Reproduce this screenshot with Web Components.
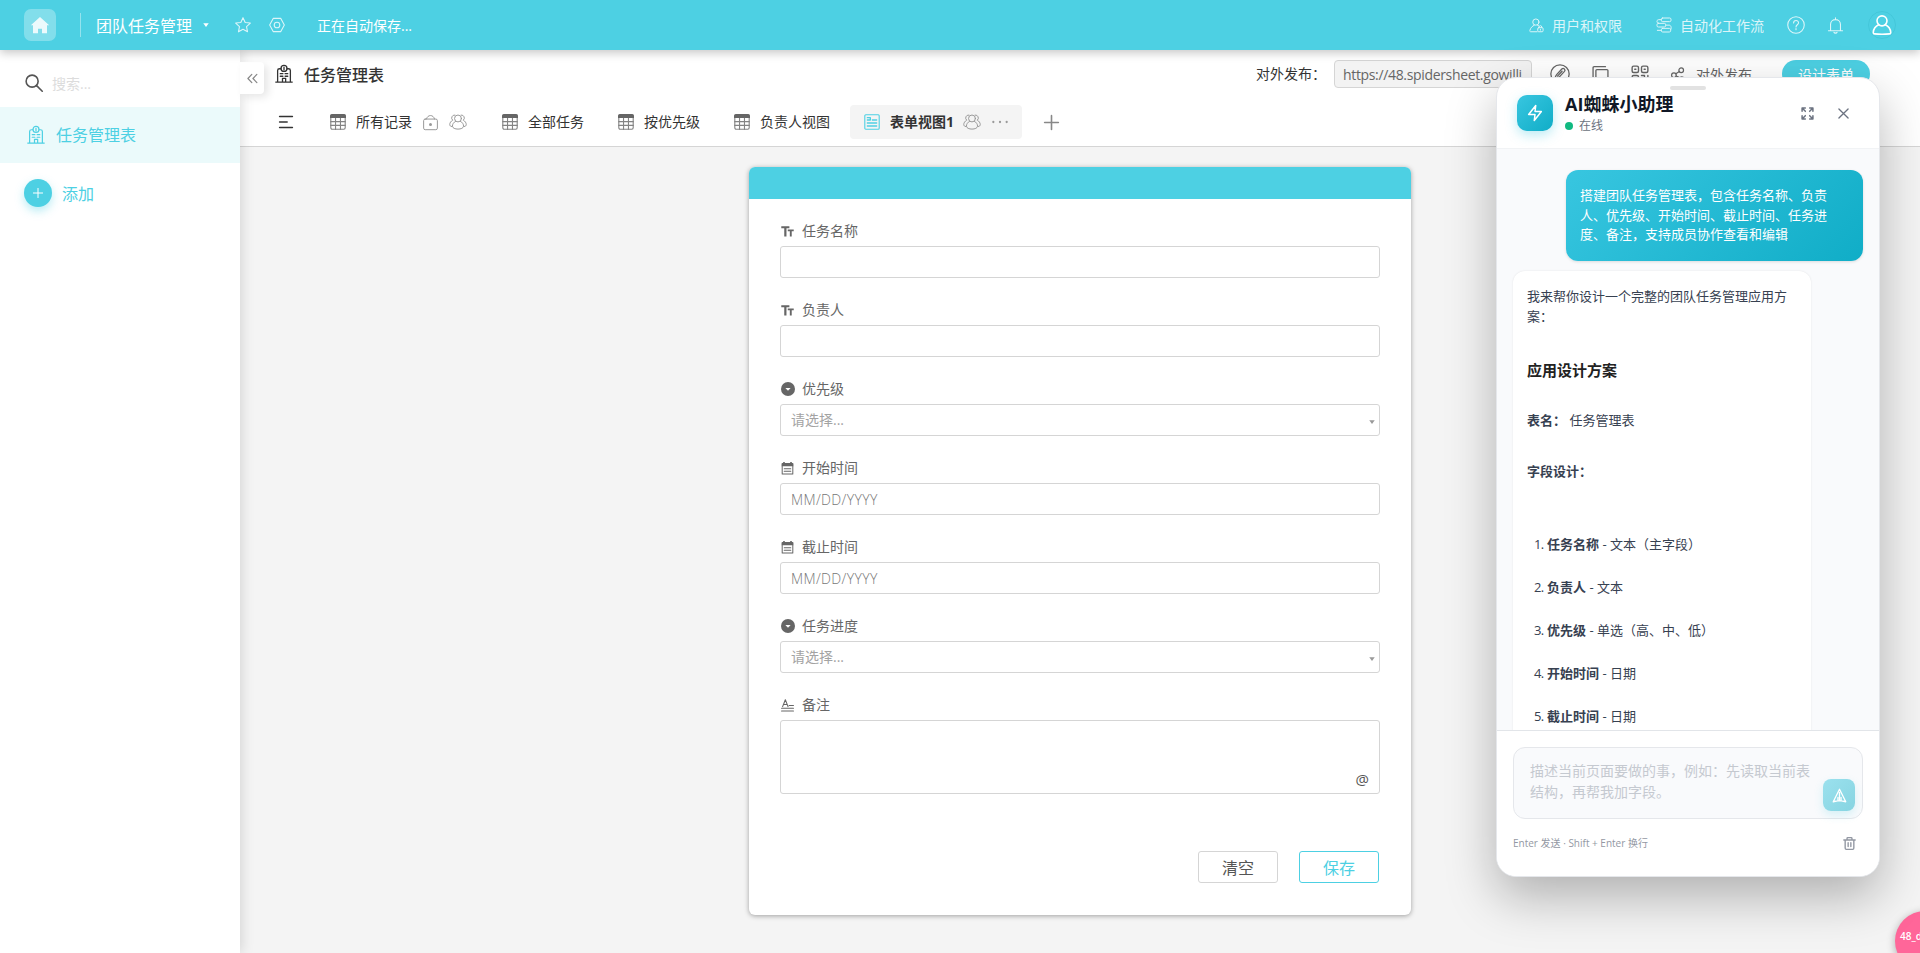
<!DOCTYPE html>
<html lang="zh-CN">
<head>
<meta charset="UTF-8">
<title>团队任务管理</title>
<style>
    html, body { margin: 0; height: 100%; overflow: hidden; }
    body {
        --accent: #4dd0e3;
        --line: #d5d5d5;
        --grad: linear-gradient(135deg, #38c6e0, #10adc7);
        background: #f4f4f4; color: #333;
        font: 14px/20px "Open Sans", "Noto Sans CJK SC", sans-serif;
    }
</style>
</head>
<body>
<sheet-app></sheet-app>

<script>
const ICONS = {
    home: '<path fill="currentColor" stroke="none" d="M12 2.5 1 12.2h2.6V22h6v-5.5h4.8V22h6v-9.8H23z"/>',
    caret: '<path fill="currentColor" stroke="none" d="M1 5h22L12 20z"/>',
    star: '<path d="m12 1 3.3 7.2 7.7.9-5.700 5.300 1.500 7.800L12 18.400l-6.800 3.800 1.500-7.800L1 9.100l7.700-.9z"/>',
    hex: '<path d="M6.500 2h11L23 12l-5.500 10h-11L1 12z"/><circle cx="12" cy="12" r="4.200"/>',
    userLock: '<circle cx="11" cy="6.500" r="5"/><path d="M13 22H2.500C1.500 22 1 21 1.500 19.500 2.500 16 5 13 8.500 11.500M13.500 11.500l2 1"/><rect x="14" y="15.500" width="8.500" height="6.500" rx="1.500"/><path d="M16 15.500v-1c0-3 4.500-3 4.500 0v1M18.200 18v1.500"/>',
    flow: '<rect x="8" y="1.500" width="14.500" height="5.500" rx="2"/><rect x="1.500" y="9.500" width="13" height="5.500" rx="2"/><rect x="8" y="17" width="14" height="5.500" rx="2"/><path d="M8 4H4C.5 4 .5 9.500 4 9.500M14.500 12.200H20c3.500 0 3.500 7.500 1.500 7.500M8 20H2"/>',
    help: '<circle cx="12" cy="12" r="11"/><path d="M8.800 9.300c0-4.500 6.600-4.200 6.600-.3 0 2.500-3.400 2.800-3.400 5.500M12 16.700v1.500"/>',
    bell: '<path d="M5 19.500V10.500c0-9 14-9 14 0v9M2 19.500h20M12 1.300v2.200M9.800 21.500c.5 1.600 3.900 1.600 4.400 0"/>',
    person: '<circle cx="12" cy="7" r="6"/><path d="M8 11.800C4 13.500 1.800 17.500 1.500 21c0 1 .6 1.700 1.500 1.700 6 .5 12 .5 18 0 .9 0 1.500-.7 1.500-1.700-.3-3.500-2.500-7.500-6.500-9.200"/>',
    search: '<circle cx="9.500" cy="9.500" r="8"/><path d="m15.500 15.500 7.500 7.500"/>',
    building: '<path d="M1 22.700h22M3.500 22.500V7.200C3.500 5.800 4.500 5 6 5h2M20.500 22.500V7.200C20.500 5.800 19.500 5 18 5h-2M10 22v-4.200h4.200V22"/><circle cx="12" cy="4.500" r="4"/><path d="M12 3v3.500M7 11.500h3.500M13.500 11.500H17M7 15h3.500M13.500 15H17"/>',
    plus: '<path d="M12 1v22M1 12h22"/>',
    fold: '<path d="M10.500 3 2 12l8.500 9M21.500 3 13 12l8.500 9"/>',
    menu: '<path d="M1 2.500h22M1 12h13M1 21.500h22"/>',
    table: '<path fill="currentColor" stroke="none" d="M3 0h18a3 3 0 0 1 3 3v3H0V3a3 3 0 0 1 3-3z"/><g opacity=".8"><rect x="1.200" y="1.200" width="21.600" height="21.600" rx="2"/><path d="M1 11.500h22M1 17h22M8.300 6v17M15.700 6v17"/></g>',
    formView: '<rect x="1.200" y="1.200" width="21.600" height="21.600" rx="1.500"/><path d="M5 5.500h4.500v3.500H5M12.500 9h6.500M5 13.500h14M5 18h14" stroke-width="2"/>',
    lock: '<rect x="1" y="6.500" width="22" height="17" rx="2.500"/><path d="M5.500 6.500C7 -1.200 17 -1.200 18.500 6.500"/><circle cx="12" cy="15" r="2.400" fill="currentColor" stroke="none"/>',
    group: '<circle cx="12" cy="7.300" r="4.600"/><path d="M8.800 11C6 12.500 4.600 15 4.600 17.500c0 5.300 14.800 5.300 14.800 0 0-2.500-1.400-5-4.200-6.500"/><path d="M7.800 2.700A3.900 3.900 0 0 0 5 9.600C2.500 11 1 13 1 15.500c0 1.500 1 2.200 2.500 2.500M16.200 2.700A3.900 3.900 0 0 1 19 9.600C21.500 11 23 13 23 15.500c0 1.500-1 2.200-2.500 2.500"/>',
    dots: '<g fill="currentColor" stroke="none"><circle cx="2" cy="12" r="1.700"/><circle cx="12" cy="12" r="1.700"/><circle cx="22" cy="12" r="1.700"/></g>',
    edit: '<circle cx="12" cy="12" r="11"/><path d="M6 17.500c.3-2 .8-3.500 2.200-5l6-6.500c2-2 5 .8 3.200 2.900l-6.400 6.800c-1.500 1.300-3 1.500-5 1.800zM9 14.500l5.500-5.800"/>',
    copy: '<rect x="5.500" y="5" width="17" height="18" rx="1.500"/><path d="M1.500 19V2.500c0-1 .5-1.500 1.500-1.500h16"/>',
    qr: '<rect x="1.500" y="1.500" width="8.500" height="8.500" rx="2"/><rect x="14" y="1.500" width="8.500" height="8.500" rx="2"/><rect x="1.500" y="14" width="8.500" height="8.500" rx="2"/><path d="M5 5.700h1.500M17.500 5.700H19M14 14h4v3M22.500 14v5M14 19v4M18 22h4.500"/>',
    share: '<circle cx="17.500" cy="5.500" r="4"/><circle cx="5" cy="14" r="4"/><circle cx="18.500" cy="20" r="3"/><path d="m8.300 11.500 6-3.800M8.800 15.500l6.900 3"/>',
    text: '<path fill="currentColor" stroke="none" d="M.5 2.500h15v3.600h-5.400V21H6V6.100H.5zM12.500 8.500h11v3.200h-3.700V21h-3.500v-9.300h-3.800z"/>',
    select: '<circle cx="12" cy="12" r="12" fill="currentColor" stroke="none"/><path d="M7.500 10.200h9L12 15z" fill="#fff" stroke="none"/>',
    date: '<path fill="currentColor" stroke="none" d="M1 3.500A1.500 1.500 0 0 1 2.500 2h19A1.500 1.500 0 0 1 23 3.500V8H1zM4 0h3V4H4zM17 0h3V4h-3z"/><path d="M2.200 8v14.300h19.600V8"/><path d="M6 12.500h12M6 17h12" stroke-width="2"/>',
    note: '<path d="m3 14 5-12.500L13 14M5 10h6M15 12h8M1 17h22M1 22h22" stroke-width="2"/>',
    bolt: '<path d="M13 2 3.500 14H12l-1 8 9.500-12H12z"/>',
    expand: '<path d="M2 8V2h6M2 2l6 6M16 2h6v6M22 2l-6 6M2 16v6h6M2 22l6-6M22 16v6h-6M22 22l-6-6"/>',
    close: '<path d="m2 2 20 20M22 2 2 22"/>',
    send: '<path d="M12 2 22 22l-7-1.500H9L2 22zM12 7v13.500M9.500 19.500V15M14.500 19.500V15"/>',
    trash: '<path d="M1.500 5.500h21M7.500 5.500V2.500c0-.8.500-1.300 1.300-1.300h6.400c.8 0 1.300.5 1.300 1.300v3M4 5.500v15c0 1.300.8 2.300 2.200 2.300h11.600c1.400 0 2.200-1 2.200-2.300v-15M9.500 10.500v7M14.500 10.500v7"/>'
};

// <sheet-icon name size weight>: weight는 화면 px 기준 선 두께
class SheetIcon extends HTMLElement {
    constructor() {
        super();
        this.attachShadow({ mode: 'open' });
    }

    connectedCallback() {
        const size = Number(this.getAttribute('size') || 16);
        const weight = Number(this.getAttribute('weight') || 1) * 24 / size;
        this.shadowRoot.innerHTML = `
            <style>
                :host { display: block; flex: none; width: ${size}px; height: ${size}px; }
                svg { display: block; overflow: visible; }
            </style>
            <svg viewBox="0 0 24 24" width="${size}" height="${size}" fill="none" stroke="currentColor"
                stroke-width="${weight.toFixed(2)}" stroke-linecap="round" stroke-linejoin="round">${ICONS[this.getAttribute('name')]}</svg>
        `;
    }
}
customElements.define('sheet-icon', SheetIcon);

class TopBar extends HTMLElement {
    constructor() {
        super();
        this.attachShadow({ mode: 'open' }).innerHTML = `
            <style>
                :host {
                    display: flex; align-items: center; height: 50px; box-sizing: border-box;
                    padding: 0 24px; background: var(--accent); color: #fff;
                    box-shadow: 0 3px 9px rgba(0, 0, 0, .22); position: relative; z-index: 5;
                }
                .home {
                    width: 32px; height: 32px; border-radius: 7px; background: rgba(255, 255, 255, .3);
                    display: flex; align-items: center; justify-content: center; color: rgba(255, 255, 255, .85);
                }
                .divider { width: 1px; height: 24px; margin: 0 15px 0 24px; background: rgba(255, 255, 255, .4); }
                .title { font-size: 16px; line-height: 24px; margin-right: 11px; padding-top: 2px; white-space: nowrap; }
                .soft { opacity: .8; }
                .status { margin-left: 32px; padding-top: 1px; white-space: nowrap; }
                .right { margin-left: auto; display: flex; align-items: center; }
                .link { display: flex; align-items: center; gap: 8px; opacity: .8; white-space: nowrap; }
                .link span { padding-top: 1px; }
                .avatar {
                    width: 26px; height: 26px; border-radius: 50%; border: 1px solid rgba(0, 130, 150, .12);
                    display: flex; align-items: center; justify-content: center;
                }
            </style>
            <div class="home"><sheet-icon name="home" size="20"></sheet-icon></div>
            <div class="divider"></div>
            <div class="title">团队任务管理</div>
            <sheet-icon name="caret" size="6" style="margin-right:26px"></sheet-icon>
            <sheet-icon class="soft" name="star" size="16" weight="1.100" style="margin-right:18px"></sheet-icon>
            <sheet-icon class="soft" name="hex" size="16" weight="1.100"></sheet-icon>
            <div class="status">正在自动保存...</div>
            <div class="right">
                <div class="link" style="margin-right:34px"><sheet-icon name="userLock" size="15"></sheet-icon><span>用户和权限</span></div>
                <div class="link" style="margin-right:23px"><sheet-icon name="flow" size="16"></sheet-icon><span>自动化工作流</span></div>
                <sheet-icon class="soft" name="help" size="18" weight="1.100" style="margin-right:22px"></sheet-icon>
                <sheet-icon class="soft" name="bell" size="17" weight="1.100" style="margin-right:24px"></sheet-icon>
                <div class="avatar"><sheet-icon name="person" size="20" weight="1.600"></sheet-icon></div>
            </div>
        `;
    }
}
customElements.define('top-bar', TopBar);

class SideNav extends HTMLElement {
    constructor() {
        super();
        this.attachShadow({ mode: 'open' }).innerHTML = `
            <style>
                :host {
                    display: flex; flex-direction: column; width: 240px; flex: none; background: #fff;
                    box-shadow: 2px 0 12px rgba(0, 0, 0, .13); position: relative; z-index: 3;
                }
                .search { display: flex; align-items: center; gap: 9px; height: 57px; padding: 9px 25px 0; box-sizing: border-box; color: #dcdcdc; }
                .search sheet-icon { color: #555; }
                .search span { padding-top: 1px; }
                .item {
                    display: flex; align-items: center; gap: 11px; height: 56px; padding: 0 27px;
                    font-size: 16px; line-height: 24px; background: #ebfafb; color: var(--accent);
                }
                .add { display: flex; align-items: center; gap: 10px; padding: 16px 24px; font-size: 16px; color: var(--accent); }
                .add span { padding-top: 2px; }
                .add i {
                    width: 28px; height: 28px; border-radius: 50%; background: var(--accent); color: #fff;
                    display: flex; align-items: center; justify-content: center; box-shadow: 0 4px 10px rgba(77, 208, 227, .4);
                }
                .toggle {
                    position: absolute; left: 240px; top: 12px; width: 24px; height: 32px; background: #fff;
                    border-radius: 0 4px 4px 0; display: flex; align-items: center; justify-content: center; color: #888;
                    box-shadow: 4px 3px 8px rgba(0, 0, 0, .1);
                }
            </style>
            <div class="search"><sheet-icon name="search" size="18" weight="1.600"></sheet-icon><span>搜索...</span></div>
            <div class="item"><sheet-icon name="building" size="18" weight="1.200"></sheet-icon><span>任务管理表</span></div>
            <div class="add"><i><sheet-icon name="plus" size="10"></sheet-icon></i><span>添加</span></div>
            <div class="toggle"><sheet-icon name="fold" size="11" weight="1.200"></sheet-icon></div>
        `;
    }
}
customElements.define('side-nav', SideNav);

class ViewTab extends HTMLElement {
    constructor() {
        super();
        this.attachShadow({ mode: 'open' });
    }

    connectedCallback() {
        this.shadowRoot.innerHTML = `
            <style>
                :host {
                    display: flex; align-items: center; height: 34px; padding: 0 14px;
                    border-radius: 4px; white-space: nowrap; color: #333;
                }
                :host([active]) { background: #f4f4f4; font-weight: 700; }
                .kind { color: #666; margin-right: 10px; }
                :host([active]) .kind { color: var(--accent); }
                ::slotted(sheet-icon) { color: #999; }
            </style>
            <sheet-icon class="kind" name="${this.getAttribute('icon') || 'table'}" size="16" weight="1.100"></sheet-icon>
            <span>${this.getAttribute('label')}</span>
            <slot></slot>
        `;
    }
}
customElements.define('view-tab', ViewTab);

class SheetHead extends HTMLElement {
    constructor() {
        super();
        this.attachShadow({ mode: 'open' }).innerHTML = `
            <style>
                :host { display: block; height: 96px; background: #fff; border-bottom: 1px solid var(--line); }
                .row { display: flex; align-items: center; }
                .title { height: 28px; padding: 10px 50px 0 35px; color: #666; }
                .title h1 { margin: 0 0 0 11px; padding-top: 1px; font-size: 16px; line-height: 24px; font-weight: 500; color: #333; }
                .publish { margin-left: auto; color: #333; width: 78px; white-space: nowrap; }
                .url {
                    width: 180px; height: 26px; line-height: 27px; padding: 0 8px; border: 1px solid var(--line);
                    border-radius: 4px; background: #f3f3f3; overflow: hidden; white-space: nowrap;
                    letter-spacing: -.34px; margin-right: 18px;
                }
                .btn { width: 88px; height: 28px; border-radius: 14px; background: var(--accent); color: #fff; text-align: center; line-height: 30px; }
                .views { padding: 17px 0 0 39px; gap: 6px; }
            </style>
            <div class="row title">
                <sheet-icon name="building" size="18" weight="1.300" style="color:#333"></sheet-icon>
                <h1>任务管理表</h1>
                <div class="publish">对外发布：</div>
                <div class="url">https://48.spidersheet.gowilli</div>
                <sheet-icon name="edit" size="20" weight="1.300" style="margin-right:22px"></sheet-icon>
                <sheet-icon name="copy" size="17" weight="1.300" style="margin-right:22px"></sheet-icon>
                <sheet-icon name="qr" size="18" weight="1.400" style="margin-right:22px"></sheet-icon>
                <sheet-icon name="share" size="14" weight="1.200" style="margin-right:11px"></sheet-icon>
                <span style="margin-right:30px;padding-top:2px">对外发布</span>
                <div class="btn">设计表单</div>
            </div>
            <div class="row views">
                <sheet-icon name="menu" size="14" weight="1.500" style="margin-right:17px"></sheet-icon>
                <view-tab label="所有记录">
                    <sheet-icon name="lock" size="15" style="margin:0 11px"></sheet-icon>
                    <sheet-icon name="group" size="18" style="margin-right:1px"></sheet-icon>
                </view-tab>
                <view-tab label="全部任务"></view-tab>
                <view-tab label="按优先级"></view-tab>
                <view-tab label="负责人视图"></view-tab>
                <view-tab label="表单视图1" icon="formView" active>
                    <sheet-icon name="group" size="18" style="margin:0 11px 0 9px"></sheet-icon>
                    <sheet-icon name="dots" size="16"></sheet-icon>
                </view-tab>
                <sheet-icon name="plus" size="15" weight="1.600" style="margin-left:16px;color:#888"></sheet-icon>
            </div>
        `;
    }
}
customElements.define('sheet-head', SheetHead);

class FormField extends HTMLElement {
    constructor() {
        super();
        this.attachShadow({ mode: 'open' });
    }

    connectedCallback() {
        const type = this.getAttribute('type');
        const iconSize = type === 'select' ? 14 : 13;
        this.shadowRoot.innerHTML = `
            <style>
                :host { display: block; margin-bottom: 21px; color: #666; }
                .label { display: flex; align-items: center; height: 22px; padding-left: 1px; margin-bottom: 4px; }
                .label sheet-icon { margin-right: ${21 - iconSize}px; }
                .box {
                    display: flex; align-items: center; justify-content: space-between; height: 32px; box-sizing: border-box;
                    border: 1px solid var(--line); border-radius: 3px; padding: 0 4px 0 10px; color: #a3a3a3;
                }
                .box.note {
                    height: 74px; align-items: flex-end; justify-content: flex-end; padding: 0 10px 4px;
                    color: #555; font-size: 15px; font-weight: 500;
                }
                .box.date { font-weight: 300; color: #777; letter-spacing: .38px; padding-top: 2px; }
            </style>
            <div class="label"><sheet-icon name="${type}" size="${iconSize}"></sheet-icon><span>${this.getAttribute('label')}</span></div>
            <div class="box ${type}">
                <slot></slot>
                ${type === 'select' ? '<sheet-icon name="caret" size="6" style="color:#999;margin-top:4px"></sheet-icon>' : ''}
            </div>
        `;
    }
}
customElements.define('form-field', FormField);

class FormCard extends HTMLElement {
    constructor() {
        super();
        this.attachShadow({ mode: 'open' }).innerHTML = `
            <style>
                :host {
                    display: block; width: 662px; height: 748px; margin: 20px auto 0; background: #fff;
                    border-radius: 6px; overflow: hidden; box-shadow: 0 1px 5px rgba(0, 0, 0, .35);
                }
                .bar { height: 32px; background: var(--accent); }
                .fields { padding: 21px 31px 0; }
                .actions { display: flex; justify-content: flex-end; gap: 21px; padding: 36px 32px 0; font-size: 16px; }
                .actions div {
                    width: 80px; height: 32px; line-height: 32px; box-sizing: border-box; text-align: center;
                    border: 1px solid var(--line); border-radius: 3px; color: #555;
                }
                .actions .save { border-color: var(--accent); color: var(--accent); }
            </style>
            <div class="bar"></div>
            <div class="fields"><slot></slot></div>
            <div class="actions"><div>清空</div><div class="save">保存</div></div>
        `;
    }
}
customElements.define('form-card', FormCard);

class ChatBubble extends HTMLElement {
    constructor() {
        super();
        this.attachShadow({ mode: 'open' }).innerHTML = `
            <style>
                :host {
                    display: block; box-sizing: border-box; width: 298px; padding: 16px 14px; border-radius: 12px;
                    font-size: 13px; line-height: 19.5px; background: #fff; color: #374151;
                    box-shadow: 0 0 2px rgba(0, 0, 0, .1);
                }
                :host([mine]) {
                    width: 297px; height: 91px; margin-left: auto; background: var(--grad); color: #fff;
                    box-shadow: 0 1px 3px rgba(0, 0, 0, .12);
                }
            </style>
            <slot></slot>
        `;
    }
}
customElements.define('chat-bubble', ChatBubble);

class AssistantPanel extends HTMLElement {
    constructor() {
        super();
        this.attachShadow({ mode: 'open' }).innerHTML = `
            <style>
                :host {
                    position: absolute; left: 1496px; top: 77px; width: 384px; height: 800px; box-sizing: border-box;
                    display: flex; flex-direction: column; border: 1px solid #e5e7eb; border-radius: 20px;
                    background: #fff; overflow: hidden; z-index: 10;
                    box-shadow: 0 20px 50px rgba(0, 0, 0, .28);
                }
                .grip { width: 36px; height: 4px; border-radius: 2px; background: #e2e2e2; margin: 8px auto 0; }
                header { height: 71px; border-bottom: 1px solid #f1f3f5; box-sizing: border-box; flex: none; }
                .bar { display: flex; align-items: center; height: 36px; padding: 5px 30px 0 20px; }
                .logo {
                    width: 36px; height: 36px; border-radius: 10px; background: var(--grad); color: #fff;
                    display: flex; align-items: center; justify-content: center; box-shadow: 0 4px 12px rgba(56, 198, 224, .35);
                    margin-right: 12px;
                }
                .who { align-self: flex-start; }
                h2 { margin: -2px 0 2px; font-size: 18px; line-height: 22px; color: #111827; white-space: nowrap; }
                .state { display: flex; align-items: center; gap: 6px; font-size: 12px; line-height: 18px; color: #6b7280; }
                .state::before { content: ""; width: 8px; height: 8px; border-radius: 50%; background: #10b981; }
                .tools { margin-left: auto; display: flex; align-items: center; gap: 24px; color: #6b7280; }
                .chat { flex: 1; min-height: 0; overflow: hidden; background: #f9fafc; padding: 21px 16px 0; }
                h3 { margin: 0; font-size: 15px; line-height: 22px; color: #222; }
                p { margin: 0; }
                ol { margin: 54px 0 0; padding: 0 0 0 7px; list-style: none; }
                li { display: flex; height: 43px; }
                .num { width: 13px; letter-spacing: -.6px; }
                footer { height: 146px; flex: none; box-sizing: border-box; border-top: 1px solid #e2e5e9; padding: 16px; background: #fff; }
                .input {
                    display: flex; box-sizing: border-box; height: 72px; border: 1px solid #e5e7eb; border-radius: 12px;
                    background: #f9fafc; padding: 12px 7px 7px 16px; line-height: 21px; color: #c5c9d0;
                }
                .input p { width: 286px; }
                .send {
                    margin-left: auto; align-self: flex-end; width: 32px; height: 32px; border-radius: 8px; flex: none;
                    background: linear-gradient(135deg, #9be1ee, #86d4e1); color: #fff;
                    display: flex; align-items: center; justify-content: center; box-shadow: 0 4px 10px rgba(56, 198, 224, .18);
                }
                .hint { display: flex; align-items: center; justify-content: space-between; padding: 14px 7px 0 0; font-size: 10px; color: #9398a3; }
            </style>
            <header>
                <div class="grip"></div>
                <div class="bar">
                    <div class="logo"><sheet-icon name="bolt" size="18" weight="1.500"></sheet-icon></div>
                    <div class="who"><h2>AI蜘蛛小助理</h2><div class="state">在线</div></div>
                    <div class="tools">
                        <sheet-icon name="expand" size="13" weight="1.500"></sheet-icon>
                        <sheet-icon name="close" size="11" weight="1.300"></sheet-icon>
                    </div>
                </div>
            </header>
            <div class="chat">
                <chat-bubble mine>搭建团队任务管理表，包含任务名称、负责人、优先级、开始时间、截止时间、任务进度、备注，支持成员协作查看和编辑</chat-bubble>
                <chat-bubble style="margin-top:10px;height:600px">
                    <p>我来帮你设计一个完整的团队任务管理应用方案：</p>
                    <h3 style="margin-top:33px">应用设计方案</h3>
                    <p style="margin-top:30px"><b>表名：</b> 任务管理表</p>
                    <p style="margin-top:31px"><b>字段设计：</b></p>
                    <ol>
                        <li><span class="num">1.</span><span><b>任务名称</b> - 文本（主字段）</span></li>
                        <li><span class="num">2.</span><span><b>负责人</b> - 文本</span></li>
                        <li><span class="num">3.</span><span><b>优先级</b> - 单选（高、中、低）</span></li>
                        <li><span class="num">4.</span><span><b>开始时间</b> - 日期</span></li>
                        <li><span class="num">5.</span><span><b>截止时间</b> - 日期</span></li>
                    </ol>
                </chat-bubble>
            </div>
            <footer>
                <div class="input">
                    <p>描述当前页面要做的事，例如：先读取当前表结构，再帮我加字段。</p>
                    <div class="send"><sheet-icon name="send" size="15" weight="1.300"></sheet-icon></div>
                </div>
                <div class="hint"><span>Enter 发送 · Shift + Enter 换行</span><sheet-icon name="trash" size="13" weight="1.400"></sheet-icon></div>
            </footer>
        `;
    }
}
customElements.define('assistant-panel', AssistantPanel);

class SheetApp extends HTMLElement {
    constructor() {
        super();
        this.attachShadow({ mode: 'open' }).innerHTML = `
            <style>
                :host { display: flex; flex-direction: column; height: 100vh; position: relative; overflow: hidden; }
                .body { display: flex; flex: 1; min-height: 0; }
                main { flex: 1; min-width: 0; }
                .badge {
                    position: absolute; left: 1895px; top: 911px; width: 60px; height: 60px; box-sizing: border-box;
                    border-radius: 50%; background: #ff6699; color: #fff; padding-left: 5px; white-space: nowrap;
                    font-size: 10px; font-weight: 600; line-height: 50px; box-shadow: 0 2px 8px rgba(0, 0, 0, .3);
                }
            </style>
            <top-bar></top-bar>
            <div class="body">
                <side-nav></side-nav>
                <main>
                    <sheet-head></sheet-head>
                    <form-card>
                        <form-field type="text" label="任务名称"></form-field>
                        <form-field type="text" label="负责人"></form-field>
                        <form-field type="select" label="优先级">请选择...</form-field>
                        <form-field type="date" label="开始时间">MM/DD/YYYY</form-field>
                        <form-field type="date" label="截止时间">MM/DD/YYYY</form-field>
                        <form-field type="select" label="任务进度">请选择...</form-field>
                        <form-field type="note" label="备注">@</form-field>
                    </form-card>
                </main>
            </div>
            <assistant-panel></assistant-panel>
            <div class="badge">48_d</div>
        `;
    }
}
customElements.define('sheet-app', SheetApp);
</script>
</body>
</html>
